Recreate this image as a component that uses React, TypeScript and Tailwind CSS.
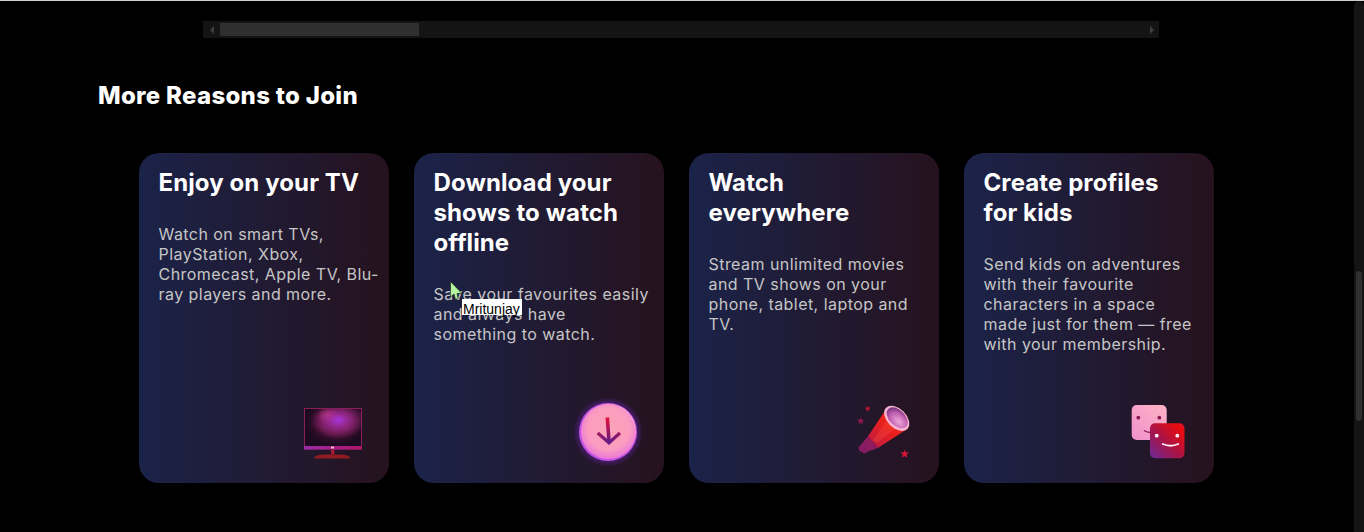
const CARDS = [
  {
    id: "tv",
    title: "Enjoy on your TV",
    body: "Watch on smart TVs,\nPlayStation, Xbox,\nChromecast, Apple TV, Blu-\nray players and more.",
    icon: <TvIcon />,
    iconPos: "right-[26px] bottom-[23px]",
  },
  {
    id: "download",
    title: "Download your shows to watch offline",
    body: "Save your favourites easily\nand always have\nsomething to watch.",
    icon: <DownloadIcon />,
    iconPos: "right-[21px] bottom-[16px]",
  },
  {
    id: "everywhere",
    title: "Watch everywhere",
    body: "Stream unlimited movies\nand TV shows on your\nphone, tablet, laptop and\nTV.",
    icon: <TelescopeIcon />,
    iconPos: "right-[24px] bottom-[23px]",
  },
  {
    id: "kids",
    title: "Create profiles for kids",
    body: "Send kids on adventures\nwith their favourite\ncharacters in a space\nmade just for them — free\nwith your membership.",
    icon: <KidsIcon />,
    iconPos: "right-[27px] bottom-[22px]",
  },
];

function Star({ cx, cy, r, fill }: { cx: number; cy: number; r: number; fill: string }) {
  const pts = Array.from({ length: 10 }, (_, i) => {
    const a = (Math.PI / 5) * i - Math.PI / 2;
    const d = i % 2 === 0 ? r : r * 0.42;
    return `${cx + d * Math.cos(a)},${cy + d * Math.sin(a)}`;
  });
  return <polygon points={pts.join(" ")} fill={fill} />;
}

function TvIcon() {
  return (
    <svg width="60" height="54" viewBox="0 0 60 54">
      <defs>
        <radialGradient id="tvGlow" cx="0.55" cy="0.35" r="0.55">
          <stop offset="0" stopColor="#6a1c80" />
          <stop offset="0.45" stopColor="#5a1444" />
          <stop offset="0.8" stopColor="#2a0c26" />
          <stop offset="1" stopColor="#1c0a20" />
        </radialGradient>
        <radialGradient id="tvCore" cx="0.6" cy="0.3" r="0.5">
          <stop offset="0" stopColor="#a634e0" />
          <stop offset="0.35" stopColor="#a02c98" stopOpacity="0.8" />
          <stop offset="1" stopColor="#a02c70" stopOpacity="0" />
        </radialGradient>
        <radialGradient id="tvPink" cx="0.42" cy="0.18" r="0.2">
          <stop offset="0" stopColor="#c84080" />
          <stop offset="1" stopColor="#c84080" stopOpacity="0" />
        </radialGradient>
        <linearGradient id="tvEdge" x1="0" x2="1" y1="0" y2="0">
          <stop offset="0" stopColor="#9a2ca8" />
          <stop offset="1" stopColor="#b01468" />
        </linearGradient>
      </defs>
      <rect x="1.5" y="2.5" width="57" height="40.5" fill="url(#tvGlow)" stroke="#8a1e58" strokeWidth="1" />
      <rect x="2" y="3" width="56" height="37" fill="url(#tvPink)" />
      <rect x="2" y="3" width="56" height="37" fill="url(#tvCore)" />
      <rect x="1" y="40" width="58" height="3.5" fill="url(#tvEdge)" />
      <rect x="28" y="40.5" width="3" height="2" fill="#f0b8c8" />
      <rect x="28" y="43.5" width="3.5" height="5" fill="#a01c30" />
      <path d="M11 52.6 Q11 49 20 48.4 L39 48.4 Q47 49 47 52.6 Z" fill="#901c22" />
    </svg>
  );
}

function DownloadIcon() {
  return (
    <svg width="70" height="70" viewBox="0 0 70 70">
      <defs>
        <radialGradient id="dlGlow" cx="0.5" cy="0.5" r="0.5">
          <stop offset="0.8" stopColor="#4a1c70" />
          <stop offset="1" stopColor="#4a1c70" stopOpacity="0" />
        </radialGradient>
        <radialGradient id="dlFill" cx="0.5" cy="0.45" r="0.55">
          <stop offset="0" stopColor="#fca4b8" />
          <stop offset="0.7" stopColor="#fb9cc0" />
          <stop offset="1" stopColor="#ea78d8" />
        </radialGradient>
        <linearGradient id="dlArrow" x1="0" x2="0" y1="0" y2="1">
          <stop offset="0" stopColor="#e5103a" />
          <stop offset="1" stopColor="#6a1a80" />
        </linearGradient>
        <linearGradient id="dlHead" x1="0" x2="1" y1="0" y2="0">
          <stop offset="0" stopColor="#a01860" />
          <stop offset="0.5" stopColor="#5e1c88" />
          <stop offset="1" stopColor="#a01860" />
        </linearGradient>
      </defs>
      <circle cx="35" cy="35" r="35" fill="url(#dlGlow)" />
      <circle cx="35" cy="35" r="29" fill="#c452e4" />
      <circle cx="35.6" cy="34.4" r="27.6" fill="url(#dlFill)" />
      <path d="M46 9 A 28.5 28.5 0 0 1 62 32 A 31 31 0 0 0 46 9 Z" fill="#fde6ea" />
      <path d="M34.3 20.3 L36 44" stroke="url(#dlArrow)" strokeWidth="3.6" fill="none" />
      <path d="M24.7 36 L36 45.7 L47 36" stroke="url(#dlHead)" strokeWidth="3.4" fill="none" />
    </svg>
  );
}

function TelescopeIcon() {
  return (
    <svg width="60" height="60" viewBox="0 0 60 60">
      <defs>
        <linearGradient id="tsBody" x1="0.2" x2="0.8" y1="0.9" y2="0.3">
          <stop offset="0" stopColor="#c81c3c" />
          <stop offset="0.55" stopColor="#e8201e" />
          <stop offset="1" stopColor="#f0281c" />
        </linearGradient>
        <linearGradient id="tsTail" x1="0" x2="1" y1="1" y2="0">
          <stop offset="0" stopColor="#7e1c68" />
          <stop offset="1" stopColor="#9a1c58" />
        </linearGradient>
        <radialGradient id="tsLens" cx="0.65" cy="0.6" r="0.7">
          <stop offset="0" stopColor="#f0a8dc" />
          <stop offset="0.6" stopColor="#c060b0" />
          <stop offset="1" stopColor="#6e2c78" />
        </radialGradient>
      </defs>
      <path d="M31.7 8.3 L12.7 36.7 L23.3 47.7 L53.3 28.3 Z" fill="url(#tsBody)" />
      <path d="M12.7 36.7 L4 46.7 Q3 50 5 51 L9 53.5 Q11 53 12 52 L23.3 47.7 Z" fill="url(#tsTail)" />
      <path d="M36 14 L18 40 L22 43 L46 24 Z" fill="#ff5a48" opacity="0.25" />
      <ellipse cx="41.7" cy="18.3" rx="15" ry="9.6" transform="rotate(45 41.7 18.3)" fill="#f8b4d0" />
      <ellipse cx="42.2" cy="17.8" rx="12.6" ry="7.8" transform="rotate(45 42.2 17.8)" fill="url(#tsLens)" />
      <Star cx={12.7} cy={8.7} r={3.2} fill="#c0142e" />
      <Star cx={5.7} cy={21} r={4} fill="#8e1850" />
      <Star cx={49.7} cy={54} r={4.6} fill="#d8143a" />
    </svg>
  );
}

function KidsIcon() {
  return (
    <svg width="56" height="56" viewBox="0 0 56 56">
      <defs>
        <linearGradient id="kidBack" x1="0" x2="1" y1="1" y2="0">
          <stop offset="0" stopColor="#f090cc" />
          <stop offset="1" stopColor="#ffb4c4" />
        </linearGradient>
        <linearGradient id="kidFront" x1="0" x2="1" y1="1" y2="0">
          <stop offset="0" stopColor="#6a2a98" />
          <stop offset="0.45" stopColor="#a81448" />
          <stop offset="0.85" stopColor="#e80c10" />
          <stop offset="1" stopColor="#d81828" />
        </linearGradient>
      </defs>
      <rect x="0.7" y="0" width="35" height="35" rx="5" fill="url(#kidBack)" />
      <circle cx="7.3" cy="12.7" r="1.9" fill="#8a1850" />
      <circle cx="28.3" cy="12.7" r="1.9" fill="#8a1850" />
      <path d="M13 25.5 Q16 27.5 20 27.5" stroke="#8a1850" strokeWidth="1.5" fill="none" />
      <rect x="19" y="18.3" width="34.5" height="35" rx="5" fill="url(#kidFront)" />
      <circle cx="25.7" cy="30.7" r="1.9" fill="#fdeef2" />
      <circle cx="46.3" cy="30.7" r="1.9" fill="#fdeef2" />
      <path d="M31.7 39 Q39.5 42.5 47.3 39" stroke="#fdeef2" strokeWidth="1.8" fill="none" strokeLinecap="round" />
    </svg>
  );
}

function ReasonCard({ title, body, icon, iconPos }: { title: string; body: string; icon: React.ReactNode; iconPos: string }) {
  return (
    <div className="relative h-[330px] w-[250px] rounded-[20px] bg-[linear-gradient(90deg,#1b2349_0%,#26121e_100%)] pl-[19.5px] pt-[15px]">
      <h3 className="w-[206px] text-[24px] leading-[30px] font-bold tracking-[0.1px] text-white">{title}</h3>
      <p className="mt-[26px] text-[16px] leading-5 tracking-[0.45px] whitespace-pre text-[#c6c6c6]">{body}</p>
      <div className={`absolute ${iconPos}`}>{icon}</div>
    </div>
  );
}

export default function App() {
  return (
    <div className="relative flex h-[532px] w-[1364px] overflow-hidden bg-black border-t border-[#cfcfcf] font-['Inter','Noto_Sans',sans-serif]">
      <main className="w-[1354px]">
        {/* horizontal scroller of the row above */}
        <div className="mt-5 ml-[203px] flex h-[17px] w-[956px] items-center bg-[#141414]">
          <div className="flex w-[17px] justify-center">
            <span className="h-0 w-0 border-y-4 border-r-4 border-y-transparent border-r-[#3f3f3f]" />
          </div>
          <div className="h-[13px] w-[199px] bg-[#2f2f2f]" />
          <div className="flex flex-1 justify-end pr-[5px]">
            <span className="h-0 w-0 border-y-4 border-l-4 border-y-transparent border-l-[#3f3f3f]" />
          </div>
        </div>

        <h2 className="mt-[42px] ml-[98px] text-[24px] leading-[32px] font-extrabold tracking-[0.3px] text-white">More Reasons to Join</h2>

        <div className="mt-[41px] ml-[139px] flex gap-[25px]">
          {CARDS.map((c) => (
            <ReasonCard key={c.id} title={c.title} body={c.body} icon={c.icon} iconPos={c.iconPos} />
          ))}
        </div>
      </main>

      <div className="flex-1 rounded-t-full bg-[#141414] pt-[270px]">
        <div className="mx-auto h-[150px] w-1.5 rounded-full bg-[#2f2f2f]" />
      </div>

      {/* cursor + tooltip captured in the screenshot */}
      <svg className="absolute left-[450px] top-[280px]" width="13" height="20" viewBox="0 0 13 20">
        <path d="M0.5 0.5 L0.5 16 L4 13 L5.5 18.5 L8 17.5 L7 12.5 L12 12.5 Z" fill="#b4f5a0" stroke="#1a2a1a" strokeWidth="0.7" />
      </svg>
      <div className="absolute left-[462px] top-[298px] h-4 w-[60px] bg-white pl-px font-['Liberation_Sans',sans-serif] text-[14px] leading-[20px] whitespace-nowrap text-black">
        Mritunjay
      </div>
    </div>
  );
}
